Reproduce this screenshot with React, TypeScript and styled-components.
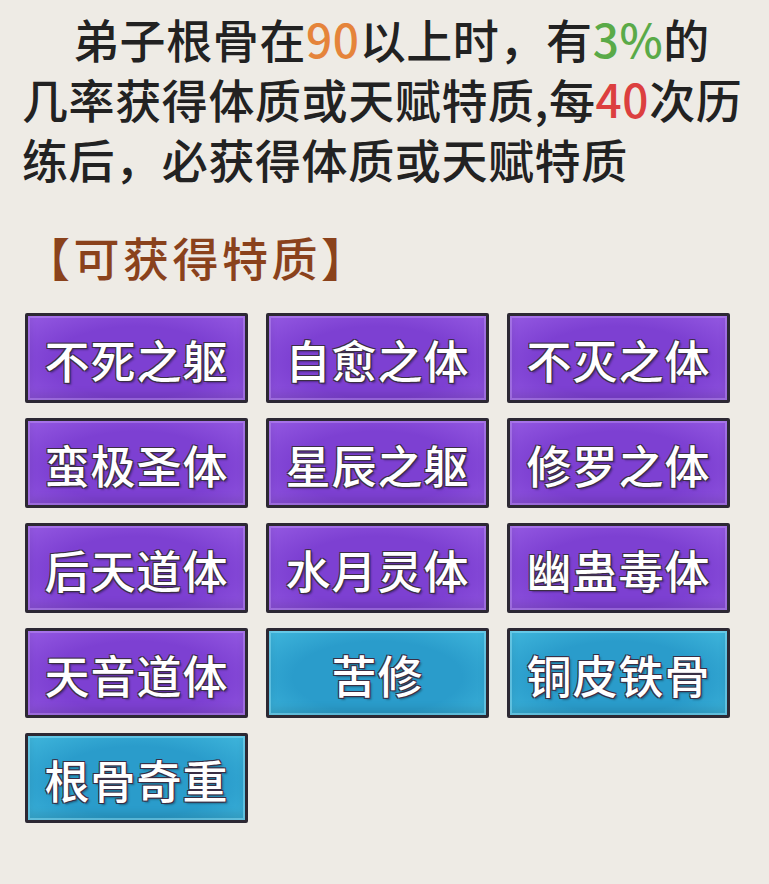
import React from 'react';
import styled, { createGlobalStyle } from 'styled-components';

const GlobalStyle = createGlobalStyle`
  html, body {
    margin: 0;
    padding: 0;
    background: #eeebe5;
  }
  body {
    font-family: "Noto Sans CJK SC", "Noto Sans", sans-serif;
  }
`;

const Page = styled.div`
  width: 769px;
  min-height: 884px;
  padding: 8px 0 0 22px;
  box-sizing: border-box;
  background: #eeebe5;
`;

const Intro = styled.p`
  margin: 0;
  font-size: 46px;
  line-height: 60px;
  font-weight: 500;
  color: #222222;
  text-indent: 51px;
  letter-spacing: 0.6px;
`;

const Highlight = styled.span<{ tone: string }>`
  color: ${({ tone }) => tone};
`;

const SectionTitle = styled.h2`
  margin: 40px 0 0 2px;
  font-size: 46px;
  line-height: 56px;
  font-weight: 500;
  letter-spacing: 3.5px;
  color: #8a421c;
`;

const TraitGrid = styled.div`
  display: grid;
  grid-template-columns: repeat(3, 223px);
  grid-auto-rows: 90px;
  column-gap: 18px;
  row-gap: 15px;
  margin: 29px 0 0 3px;
`;

const TraitButton = styled.div<{ rare: boolean }>`
  box-sizing: border-box;
  display: flex;
  align-items: center;
  justify-content: center;
  border: 3px solid #2c2833;
  border-radius: 2px;
  background: ${({ rare }) =>
    rare
      ? 'radial-gradient(ellipse at 50% 55%, #2a9ccb 55%, #3fb6dc 100%)'
      : 'radial-gradient(ellipse at 50% 55%, #7d40d2 55%, #9459e2 100%)'};
  box-shadow: inset 0 0 0 2px
      ${({ rare }) => (rare ? 'rgba(150, 230, 250, 0.45)' : 'rgba(200, 160, 250, 0.4)')},
    inset 0 -6px 8px rgba(0, 0, 0, 0.12);
  color: #ffffff;
  font-size: 45px;
  font-weight: 500;
  letter-spacing: 1px;
  padding-top: 2px;
  text-shadow: 1px 1px 0 #3a2e44, -1px -1px 0 #3a2e44, 1px -1px 0 #3a2e44,
    -1px 1px 0 #3a2e44, 2px 2px 2px rgba(0, 0, 0, 0.35);
`;

const traits: { name: string; rare?: boolean }[] = [
  { name: '不死之躯' },
  { name: '自愈之体' },
  { name: '不灭之体' },
  { name: '蛮极圣体' },
  { name: '星辰之躯' },
  { name: '修罗之体' },
  { name: '后天道体' },
  { name: '水月灵体' },
  { name: '幽蛊毒体' },
  { name: '天音道体' },
  { name: '苦修', rare: true },
  { name: '铜皮铁骨', rare: true },
  { name: '根骨奇重', rare: true },
];

const App: React.FC = () => (
  <Page>
    <GlobalStyle />
    <Intro>
      弟子根骨在<Highlight tone="#e5843a">90</Highlight>以上时，有
      <Highlight tone="#5aaa48">3%</Highlight>的
      <br />
      几率获得体质或天赋特质,每<Highlight tone="#dc3f3f">40</Highlight>次历
      <br />
      练后，必获得体质或天赋特质
    </Intro>
    <SectionTitle>【可获得特质】</SectionTitle>
    <TraitGrid>
      {traits.map(trait => (
        <TraitButton key={trait.name} rare={!!trait.rare}>
          {trait.name}
        </TraitButton>
      ))}
    </TraitGrid>
  </Page>
);

export default App;
